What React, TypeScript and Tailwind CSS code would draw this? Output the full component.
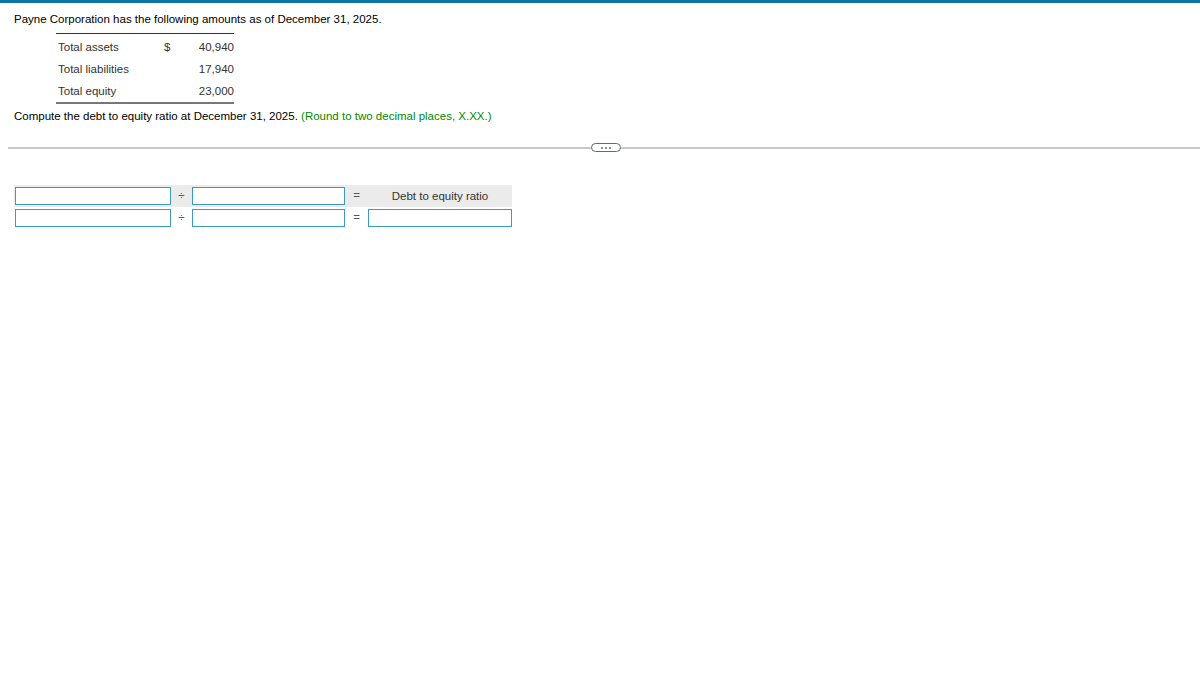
import React from "react";

const inputCls = "h-[18px] border border-[#3a9bbf] bg-white box-border";

export default function App() {
  return (
    <div className="w-[1200px] h-[679px] bg-white text-[11.5px] text-black" style={{ fontFamily: '"Liberation Sans", Arial, sans-serif' }}>
      <div className="h-[3px] bg-[#0b77a0]" />
      <div className="pl-[14px] pt-[8px] leading-[16px]">Payne Corporation has the following amounts as of December 31, 2025.</div>
      <div className="ml-[56px] mt-[6px] w-[178px] border-t border-[#333] border-b-2 border-b-[#777] pt-[3px] text-[#333]">
        <div className="flex h-[22px] items-center">
          <span className="w-[108px] pl-[2px]">Total assets</span>
          <span className="w-[18px]">$</span>
          <span className="flex-1 text-right">40,940</span>
        </div>
        <div className="flex h-[22px] items-center">
          <span className="w-[108px] pl-[2px]">Total liabilities</span>
          <span className="w-[18px]"></span>
          <span className="flex-1 text-right">17,940</span>
        </div>
        <div className="flex h-[21px] items-center">
          <span className="w-[108px] pl-[2px]">Total equity</span>
          <span className="w-[18px]"></span>
          <span className="flex-1 text-right">23,000</span>
        </div>
      </div>
      <div className="pl-[14px] mt-[4px] leading-[16px]">
        Compute the debt to equity ratio at December 31, 2025. <span className="text-[#008a00]">(Round to two decimal places, X.XX.)</span>
      </div>
      <div className="relative ml-[8px] mt-[23px] h-[2px] bg-[#c8c8d0]">
        <div className="absolute left-[583px] top-[-4px] w-[30px] h-[9px] rounded-full border border-[#5a6a80] bg-white flex items-center justify-center gap-[2px]">
          <span className="w-[2px] h-[2px] rounded-full bg-[#5a6a80]" />
          <span className="w-[2px] h-[2px] rounded-full bg-[#5a6a80]" />
          <span className="w-[2px] h-[2px] rounded-full bg-[#5a6a80]" />
        </div>
      </div>
      <div className="ml-[14px] mt-[36px] w-[498px]">
        <div className="flex items-center h-[22px] bg-[#ebebeb]">
          <div className={`${inputCls} ml-[1px] w-[156px]`} />
          <span className="w-[21px] text-center text-[#555]">÷</span>
          <div className={`${inputCls} w-[153px]`} />
          <span className="w-[23px] text-center text-[#555]">=</span>
          <span className="flex-1 text-center text-[#333] pt-[1px]">Debt to equity ratio</span>
        </div>
        <div className="flex items-center h-[22px]">
          <div className={`${inputCls} ml-[1px] w-[156px]`} />
          <span className="w-[21px] text-center text-[#555]">÷</span>
          <div className={`${inputCls} w-[153px]`} />
          <span className="w-[23px] text-center text-[#555]">=</span>
          <div className={`${inputCls} w-[144px]`} />
        </div>
      </div>
    </div>
  );
}
